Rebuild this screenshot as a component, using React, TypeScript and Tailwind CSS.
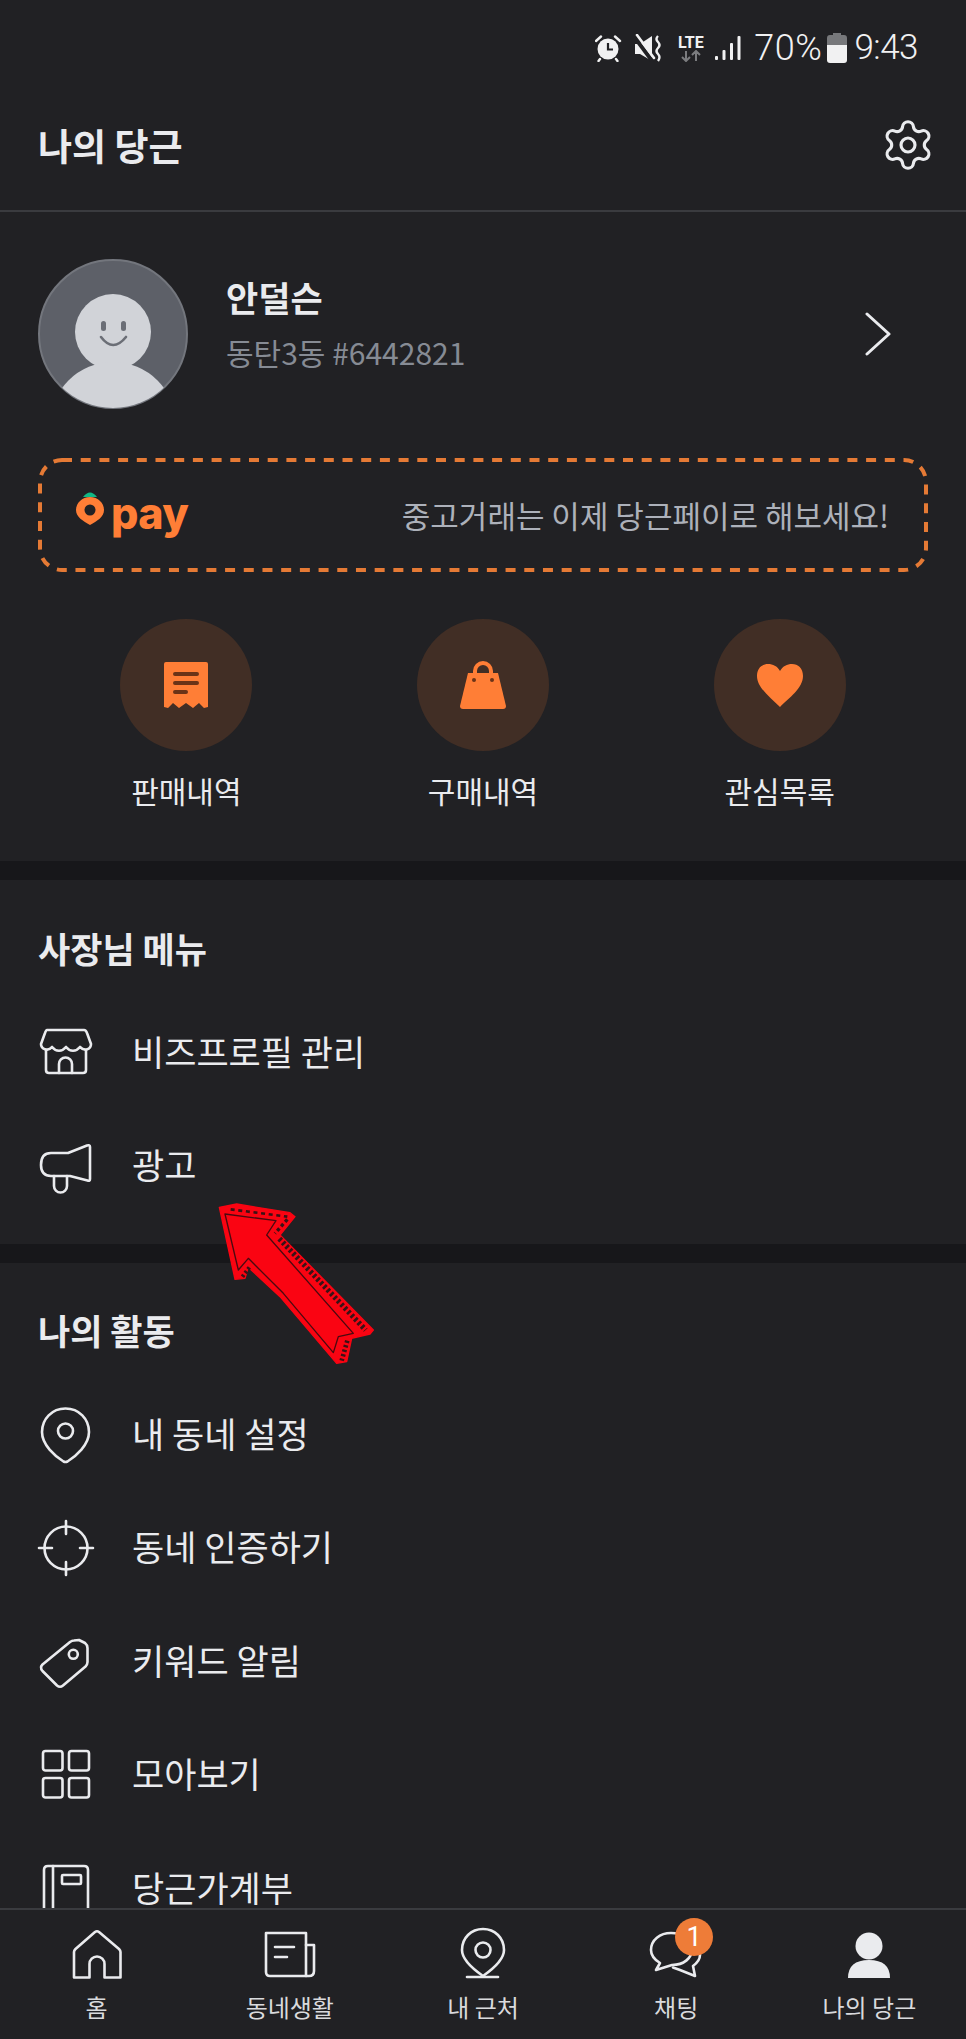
import React from "react";
import { Settings } from "lucide-react";

const ink = "#eaebee";

function Svg({ size = 56, children, className = "" }: { size?: number; children: React.ReactNode; className?: string }) {
  return (
    <svg width={size} height={size} viewBox={`0 0 ${size} ${size}`} fill="none" stroke={ink} strokeWidth={2.6} strokeLinejoin="round" strokeLinecap="round" className={"overflow-visible shrink-0 " + className}>
      {children}
    </svg>
  );
}

const StoreIcon = () => (
  <Svg>
    <path d="M9 7H46Q48 7 49 10L53 21C53 26 47 29 42 24C38 29 32 29 28 24C24 29 18 29 14 24C10 29 3 26 3 21L7 10Q8 7 9 7Z" />
    <path d="M8 27V47Q8 50 11 50H45Q48 50 48 47V27" />
    <path d="M21 50V41a6.5 6.5 0 0 1 13 0V50" />
  </Svg>
);
const MegaphoneIcon = () => (
  <Svg>
    <path d="M52 11V43Q52 45.5 49.5 44.5L32 40H13Q3 40 3 29Q3 17 13 17H30L49 9.5Q52 8.5 52 11Z" />
    <path d="M16 40V50a6.5 6.5 0 0 0 13 0V40" />
  </Svg>
);
const PinIcon = () => (
  <Svg>
    <path d="M27.5 3.5C41 3.5 51 14 51 27C51 40 38 51 29.5 56.5Q27.5 57.5 25.5 56.5C17 51 4 40 4 27C4 14 14 3.5 27.5 3.5Z" />
    <circle cx="27.5" cy="26" r="7.5" />
  </Svg>
);
const CrosshairIcon = () => (
  <Svg>
    <circle cx="28" cy="30" r="21.5" />
    <path d="M28 3V16M28 44V57M1 30H14M42 30H55" />
  </Svg>
);
const TagIcon = () => (
  <Svg>
    <path d="M32 10Q34 8.5 36 8.5L41 8L47 11Q49.5 13 49.5 16V30Q49.5 32.5 47.5 34.5L25 53.5Q22 56 19 53.5L4.5 39Q1.5 35.5 4.5 32.5Z" />
    <circle cx="35.3" cy="22.3" r="4.5" />
  </Svg>
);
const GridIcon = () => (
  <Svg>
    <rect x="5" y="6" width="19.5" height="19.5" rx="2.5" />
    <rect x="31" y="6" width="20" height="19.5" rx="2.5" />
    <rect x="5" y="33" width="19.5" height="19.5" rx="2.5" />
    <rect x="31" y="33" width="20" height="19.5" rx="2.5" />
  </Svg>
);
const LedgerIcon = () => (
  <Svg>
    <path d="M6 70V11Q6 7 10 7H46Q50 7 50 11V70" />
    <path d="M15 7V70" />
    <rect x="24" y="16" width="19" height="9" rx="1" />
  </Svg>
);

const HomeIcon = () => (
  <Svg>
    <path d="M5 50.5V25Q5 23.5 6.5 22L26 5Q28 3.5 30 5L50 22Q51.5 23.5 51.5 25V50.5H35.5V37a7.5 7.5 0 0 0 -15 0V50.5Z" />
  </Svg>
);
const NewsIcon = () => (
  <Svg>
    <path d="M44 49H8Q4 49 4 45V6H44V49Z" />
    <path d="M44 18H52V44Q52 49 47 49H44" />
    <path d="M13 20H32M13 30H25" />
  </Svg>
);
const NearIcon = () => (
  <Svg>
    <path d="M28 2C40 2 49 11 49 23C49 33 38 42 28 49C18 42 7 33 7 23C7 11 16 2 28 2Z" />
    <circle cx="28" cy="23" r="7.5" />
    <path d="M12 50H43" />
  </Svg>
);
const ChatIcon = () => (
  <Svg>
    <path d="M23 6C12 6 3 13 3 23C3 29 7 33 12 36L8 43L24 38C36 38 44 31 44 22C44 13 34 6 23 6Z" />
    <path d="M48 19C51 22 52 25 52 28C52 33 49 36 45 39L47 49L32 43L25 40.5" />
  </Svg>
);
const PersonIcon = () => (
  <svg width="56" height="56" viewBox="0 0 56 56" className="shrink-0" fill={ink}>
    <circle cx="28" cy="19" r="13.5" />
    <path d="M7 51Q7 33 28 33Q49 33 49 51Z" />
  </svg>
);

function Row({ icon, label }: { icon: React.ReactNode; label: string }) {
  return (
    <div className="flex h-[113.5px] items-center gap-[38px] px-[38px] shrink-0">
      <div className="w-[56px] h-[56px] shrink-0">{icon}</div>
      <span className="text-[35px] leading-[50px] text-[#eaebee]">{label}</span>
    </div>
  );
}

function NavItem({ icon, label, badge }: { icon: React.ReactNode; label: string; badge?: string }) {
  return (
    <div className="flex flex-col items-center pt-[17px]">
      <div className="relative w-[56px] h-[56px]">
        {icon}
        {badge && (
          <span className="absolute left-[27px] top-[-9px] w-[38px] h-[38px] rounded-full bg-[#ee7c38] text-white text-[27px] leading-[38px] text-center font-['Roboto',sans-serif]">
            {badge}
          </span>
        )}
      </div>
      <span className="mt-[8px] text-[24px] leading-[32px] text-[#d9dadd]">{label}</span>
    </div>
  );
}

function Shortcut({ icon, label }: { icon: React.ReactNode; label: string }) {
  return (
    <div className="flex flex-col items-center">
      <div className="w-[132px] h-[132px] rounded-full bg-[#412e25] flex items-center justify-center">{icon}</div>
      <span className="mt-[17px] text-[30px] leading-[44px] text-[#eaebee]">{label}</span>
    </div>
  );
}

const StatusBar = () => (
  <div className="h-[80px] flex items-center justify-end pr-[48px] shrink-0 pt-[16px]">
    <svg width="28" height="28" viewBox="0 0 28 28" className="mr-[12px]" fill="#f1f1f2">
      <circle cx="13" cy="15" r="10.5" />
      <path d="M1 7L6 2.5M25 7L20 2.5" stroke="#f1f1f2" strokeWidth="2.4" strokeLinecap="round" />
      <path d="M5 25L3.5 27M21 25L22.5 27" stroke="#f1f1f2" strokeWidth="2.4" strokeLinecap="round" />
      <path d="M13 9V15.5H18" stroke="#212124" strokeWidth="2.2" fill="none" />
    </svg>
    <svg width="28" height="28" viewBox="0 0 28 28" className="mr-[13px]" fill="#f1f1f2">
      <path d="M0 10H5L17 2V27L5 20H0Z" />
      <path d="M0 4L18 28" stroke="#212124" strokeWidth="4" />
      <path d="M2 1L19 24" stroke="#f1f1f2" strokeWidth="2.6" strokeLinecap="round" />
      <path d="M23 2Q20 5 23 8Q26 11 23 14Q20 17 23 20Q26 23 23 27" stroke="#f1f1f2" strokeWidth="2.4" fill="none" />
    </svg>
    <div className="w-[29px] mr-[9px] flex flex-col items-center">
      <span className="text-[16px] leading-[15px] font-bold text-[#f1f1f2] font-['Roboto',sans-serif]">LTE</span>
      <svg width="24" height="12" viewBox="0 0 24 12" fill="none" stroke="#7b7c7f" strokeWidth="2">
        <path d="M7 1V11M3 7L7 11L11 7M17 11V1M13 5L17 1L21 5" />
      </svg>
    </div>
    <svg width="27" height="28" viewBox="0 0 27 28" className="mr-[13px]" fill="#f1f1f2">
      <rect x="1" y="22" width="3" height="4" rx="1" />
      <rect x="8.5" y="16" width="3" height="10" rx="1" />
      <rect x="16" y="9" width="3" height="17" rx="1" />
      <rect x="23.5" y="2" width="3" height="24" rx="1" />
    </svg>
    <span className="text-[36px] leading-[40px] font-light text-[#f1f1f2] font-['Roboto',sans-serif] tracking-[0.5px]">70%</span>
    <svg width="20" height="30" viewBox="0 0 20 30" className="ml-[5px] mr-[7px]">
      <path d="M6 0H14V2H17Q20 2 20 5V12H0V5Q0 2 3 2H6Z" fill="#77787b" />
      <path d="M0 12H20V27Q20 30 17 30H3Q0 30 0 27Z" fill="#f1f1f2" />
    </svg>
    <span className="text-[35px] leading-[40px] font-light text-[#f1f1f2] font-['Roboto',sans-serif] tracking-[-0.5px]">9:43</span>
  </div>
);

const Arrow = () => (
  <svg width="190" height="190" viewBox="0 0 570 570" className="absolute left-[200px] top-[1190px]">
    <path d="M58 52L110 42L270 68L285 80L240 135L520 420L510 432L455 445L440 515L410 520L240 320L145 232L135 265L105 268Z" fill="#fa0412" stroke="#fa0412" strokeWidth="4" strokeLinejoin="round" />
    <path d="M75 72L228 92L200 135L460 430L415 440L400 488L250 310L145 205L115 240Z" fill="none" stroke="#4a0a10" strokeWidth="4" strokeLinejoin="round" />
    <g fill="none" stroke="#3a1216">
      <path d="M92 58L262 80" strokeDasharray="12 11" strokeWidth="8" />
      <path d="M262 88L225 130" strokeDasharray="10 8" strokeWidth="10" />
      <path d="M238 146L497 420" strokeDasharray="8 7" strokeWidth="16" />
      <path d="M442 452L425 512" strokeDasharray="7 7" strokeWidth="14" />
      <path d="M148 232L126 262" strokeDasharray="7 7" strokeWidth="12" />
    </g>
  </svg>
);

export default function App() {
  return (
    <div className="relative w-[966px] h-[2039px] overflow-hidden flex flex-col bg-[#212124] text-[#eaebee] font-['Noto_Sans_CJK_KR','Noto_Sans',sans-serif]">
      <StatusBar />
      <header className="h-[132px] shrink-0 flex items-center justify-between pl-[38px] pr-[30px] border-b-2 border-[#3a3b3f]">
        <h1 className="text-[37px] leading-[50px] font-bold">나의 당근</h1>
        <Settings size={56} strokeWidth={1.35} color={ink} />
      </header>

      <main className="flex-1 min-h-0 overflow-hidden">
        <section className="px-[38px] pt-[47px] pb-[49px]">
          <div className="flex items-center">
            <svg width="150" height="150" viewBox="0 0 150 150" className="shrink-0">
              <defs>
                <clipPath id="av">
                  <circle cx="75" cy="75" r="74" />
                </clipPath>
              </defs>
              <circle cx="75" cy="75" r="74" fill="#5d6068" stroke="#73767d" strokeWidth="2" />
              <g clipPath="url(#av)" fill="#d1d3d8">
                <circle cx="75" cy="73" r="38" />
                <circle cx="75" cy="166" r="63" />
              </g>
              <rect x="63" y="62" width="5" height="10" rx="2.5" fill="#6b6e76" />
              <rect x="83" y="62" width="5" height="10" rx="2.5" fill="#6b6e76" />
              <path d="M63 78Q75 94 88 78" fill="none" stroke="#6b6e76" strokeWidth="2.6" strokeLinecap="round" />
            </svg>
            <div className="ml-[38px] flex-1 flex flex-col mb-[24px]">
              <span className="text-[35px] leading-[50px] font-bold">안덜슨</span>
              <span className="mt-[10px] text-[30px] leading-[40px] text-[#868b94]">동탄3동 #6442821</span>
            </div>
            <svg width="28" height="44" viewBox="0 0 28 44" fill="none" stroke={ink} strokeWidth="3" strokeLinecap="round" strokeLinejoin="round" className="mr-[36px]">
              <path d="M3 2L25 22L3 42" />
            </svg>
          </div>

          <div className="relative mt-[49px] h-[114px] flex items-center justify-between pl-[36px] pr-[39px]">
            <svg width="890" height="114" viewBox="0 0 890 114" className="absolute left-0 top-0" fill="none">
              <rect x="2" y="2" width="886" height="110" rx="22" stroke="#e57a35" strokeWidth="4" strokeDasharray="10 8.7" />
            </svg>
            <div className="flex items-center">
              <svg width="32" height="46" viewBox="0 0 32 46" className="shrink-0 mb-[6px]">
                <path d="M9 8Q16 -1 23 8Z" fill="#12b886" />
                <path d="M16 8C24 8 30 14 30 21C30 28 23 32 16 36C9 32 2 28 2 21C2 14 8 8 16 8Z" fill="#ff7e36" />
                <circle cx="16" cy="21" r="5.5" fill="#212124" />
              </svg>
              <span className="ml-[5px] text-[43px] leading-[46px] font-extrabold text-[#ff7e36] font-['Inter',sans-serif] tracking-[-0.5px] -mt-[4px]">pay</span>
            </div>
            <span className="text-[31px] leading-[44px] text-[#adb1ba]">중고거래는 이제 당근페이로 해보세요!</span>
          </div>

          <div className="mt-[47px] grid grid-cols-3">
            <Shortcut
              label="판매내역"
              icon={
                <svg width="46" height="48" viewBox="0 0 46 48">
                  <path d="M3 1H43Q45 1 45 3V46L41 47L36 42L30 47L23 42L16 47L10 42L5 47L1 46V3Q1 1 3 1Z" fill="#ff7e36" />
                  <path d="M12 13H34M12 22H34M12 31H23" stroke="#6b3317" strokeWidth="4" strokeLinecap="round" />
                </svg>
              }
            />
            <Shortcut
              label="구매내역"
              icon={
                <svg width="48" height="50" viewBox="0 0 48 50">
                  <path d="M16 16V11a8 8 0 0 1 16 0V16" fill="none" stroke="#ff7e36" strokeWidth="4" />
                  <path d="M9 13H39L47 46Q47 49 44 49H4Q1 49 1 46Z" fill="#ff7e36" />
                  <circle cx="15" cy="20" r="2" fill="#6b3317" />
                  <circle cx="33" cy="20" r="2" fill="#6b3317" />
                </svg>
              }
            />
            <Shortcut
              label="관심목록"
              icon={
                <svg width="48" height="44" viewBox="0 0 48 44">
                  <path d="M24 44C15 35 1 25 1 13C1 5 6 1 12 1C17 1 21 3 24 8C27 3 31 1 36 1C42 1 47 5 47 13C47 25 33 35 24 44Z" fill="#ff7e36" />
                </svg>
              }
            />
          </div>
        </section>

        <div className="h-[19px] bg-[#17171a]" />

        <section className="pt-[43px] pb-[23px]">
          <h2 className="px-[38px] text-[35px] leading-[50px] font-bold mb-[21px]">사장님 메뉴</h2>
          <Row icon={<StoreIcon />} label="비즈프로필 관리" />
          <Row icon={<MegaphoneIcon />} label="광고" />
        </section>

        <div className="h-[19px] bg-[#17171a]" />

        <section className="pt-[42px]">
          <h2 className="px-[38px] text-[35px] leading-[50px] font-bold mb-[21px]">나의 활동</h2>
          <Row icon={<PinIcon />} label="내 동네 설정" />
          <Row icon={<CrosshairIcon />} label="동네 인증하기" />
          <Row icon={<TagIcon />} label="키워드 알림" />
          <Row icon={<GridIcon />} label="모아보기" />
          <Row icon={<LedgerIcon />} label="당근가계부" />
        </section>
      </main>

      <nav className="h-[131px] shrink-0 grid grid-cols-5 border-t-2 border-[#3a3b3f] bg-[#212124]">
        <NavItem icon={<HomeIcon />} label="홈" />
        <NavItem icon={<NewsIcon />} label="동네생활" />
        <NavItem icon={<NearIcon />} label="내 근처" />
        <NavItem icon={<ChatIcon />} label="채팅" badge="1" />
        <NavItem icon={<PersonIcon />} label="나의 당근" />
      </nav>

      <Arrow />
    </div>
  );
}
